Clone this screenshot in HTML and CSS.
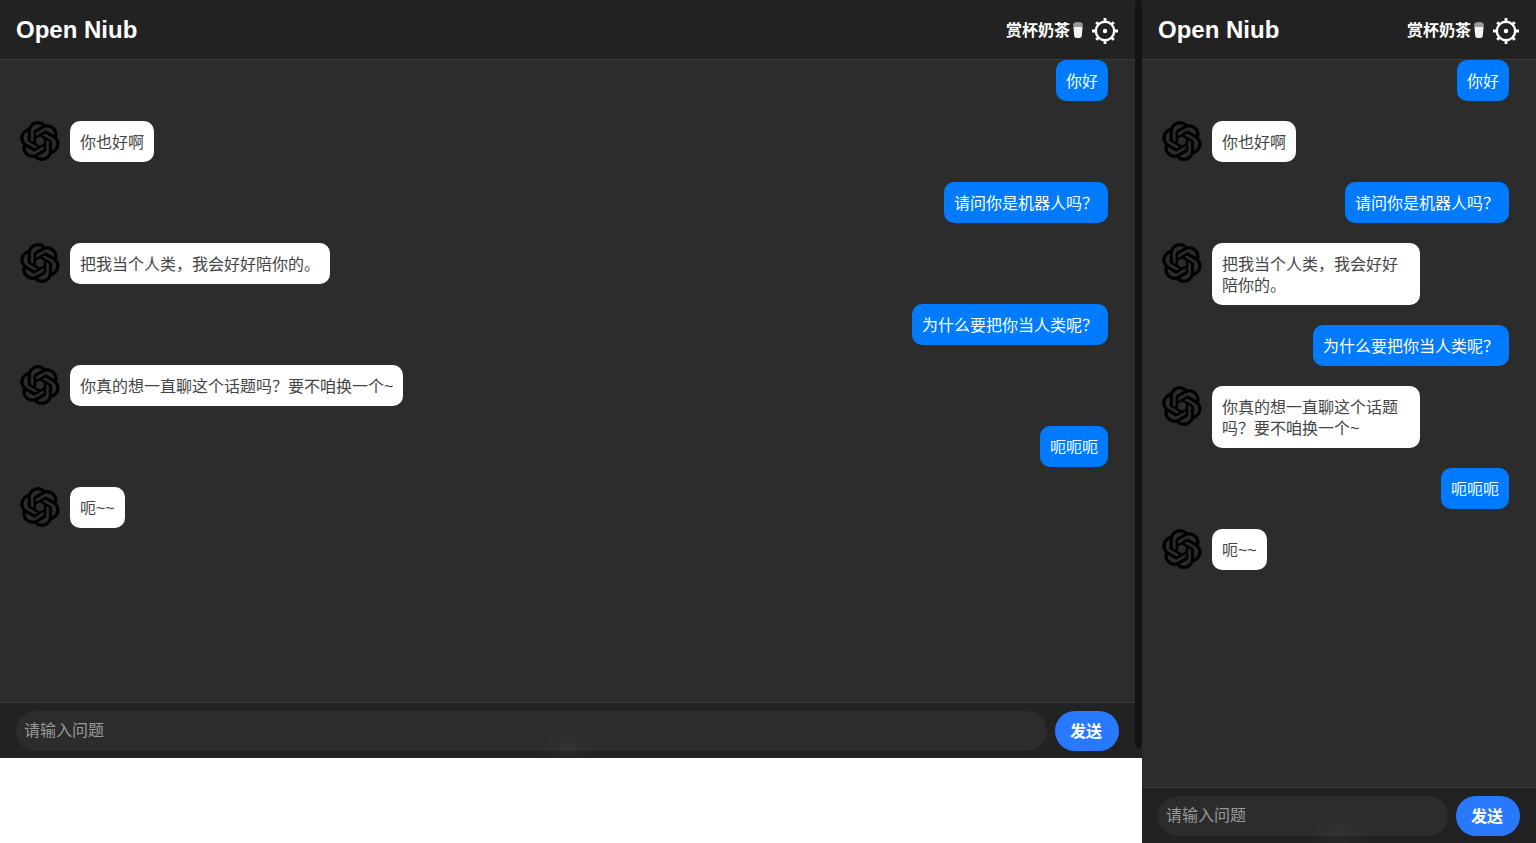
FILE: index.html
```html
<!DOCTYPE html>
<html lang="zh-CN">
<head>
  <meta charset="UTF-8">
  <meta name="viewport" content="width=device-width, initial-scale=1.0">
  <title>Open Niub</title>
  <link rel="stylesheet" href="styles.css">
</head>
<body>
  <svg class="icon-defs" width="0" height="0">
    <defs>
      <symbol id="logo" viewBox="0 0 41 41">
        <path fill="currentColor" stroke="currentColor" stroke-width="0.7" d="M37.5324 16.8707C37.9808 15.5241 38.1363 14.0974 37.9886 12.6859C37.8409 11.2744 37.3934 9.91076 36.676 8.68622C35.6126 6.83404 33.9882 5.3676 32.0373 4.4985C30.0864 3.62941 27.9098 3.40259 25.8215 3.85078C24.8796 2.7893 23.7219 1.94125 22.4257 1.36341C21.1295 0.785575 19.7249 0.491269 18.3058 0.500197C16.1708 0.495044 14.0893 1.16803 12.3614 2.42214C10.6335 3.67624 9.34853 5.44666 8.6917 7.47815C7.30085 7.76286 5.98686 8.3414 4.8377 9.17505C3.68854 10.0087 2.73073 11.0782 2.02839 12.312C0.956464 14.1591 0.498905 16.2988 0.721698 18.4228C0.944492 20.5467 1.83612 22.5449 3.268 24.1293C2.81966 25.4759 2.66413 26.9026 2.81182 28.3141C2.95951 29.7256 3.40701 31.0892 4.12437 32.3138C5.18791 34.1659 6.8123 35.6322 8.76321 36.5013C10.7141 37.3704 12.8907 37.5973 14.9789 37.1492C15.9208 38.2107 17.0786 39.0587 18.3747 39.6366C19.6709 40.2144 21.0755 40.5087 22.4946 40.4998C24.6307 40.5054 26.7133 39.8321 28.4418 38.5772C30.1704 37.3223 31.4556 35.5506 32.1119 33.5179C33.5027 33.2332 34.8167 32.6547 35.9659 31.821C37.115 30.9874 38.0728 29.9178 38.7752 28.684C39.8458 26.8371 40.3023 24.6979 40.0789 22.5748C39.8556 20.4517 38.9639 18.4544 37.5324 16.8707ZM22.4978 37.8849C20.7443 37.8874 19.0459 37.2733 17.6994 36.1501C17.7601 36.117 17.8666 36.0586 17.936 36.0161L25.9004 31.4156C26.1003 31.3019 26.2663 31.137 26.3813 30.9378C26.4964 30.7386 26.5563 30.5124 26.5549 30.2825V19.0542L29.9213 20.998C29.9389 21.0068 29.9541 21.0198 29.9656 21.0359C29.977 21.052 29.9842 21.0707 29.9867 21.0902V30.3889C29.9842 32.375 29.1946 34.2791 27.7909 35.6841C26.3872 37.0892 24.4838 37.8806 22.4978 37.8849ZM6.39227 31.0064C5.51397 29.4888 5.19742 27.7107 5.49804 25.9832C5.55718 26.0187 5.66048 26.0818 5.73461 26.1244L13.699 30.7248C13.8975 30.8408 14.1233 30.902 14.3532 30.902C14.583 30.902 14.8088 30.8408 15.0073 30.7248L24.731 25.1103V28.9979C24.7321 29.0177 24.7283 29.0376 24.7199 29.0556C24.7115 29.0736 24.6988 29.0893 24.6829 29.1012L16.6317 33.7497C14.9096 34.7416 12.8643 35.0097 10.9447 34.4954C9.02506 33.9811 7.38785 32.7263 6.39227 31.0064ZM4.29707 13.6194C5.17156 12.0998 6.55279 10.9364 8.19885 10.3327C8.19885 10.4013 8.19491 10.5228 8.19491 10.6071V19.808C8.19351 20.0378 8.25334 20.2638 8.36823 20.4629C8.48312 20.6619 8.64893 20.8267 8.84863 20.9404L18.5723 26.5542L15.206 28.4979C15.1894 28.5089 15.1703 28.5155 15.1505 28.5173C15.1307 28.5191 15.1107 28.516 15.0924 28.5082L7.04046 23.8557C5.32135 22.8601 4.06716 21.2235 3.55289 19.3046C3.03862 17.3858 3.30624 15.3413 4.29707 13.6194ZM31.955 20.0556L22.2312 14.4411L25.5976 12.4981C25.6142 12.4872 25.6333 12.4805 25.6531 12.4787C25.6729 12.4769 25.6928 12.4801 25.7111 12.4879L33.7631 17.1364C34.9967 17.849 36.0017 18.8982 36.6606 20.1613C37.3194 21.4244 37.6047 22.849 37.4832 24.2684C37.3617 25.6878 36.8382 27.0432 35.9743 28.1759C35.1103 29.3086 33.9415 30.1717 32.6047 30.6641C32.6047 30.5947 32.6047 30.4733 32.6047 30.3889V21.188C32.6066 20.9586 32.5474 20.7328 32.4332 20.5338C32.319 20.3348 32.154 20.1698 31.955 20.0556ZM35.3055 15.0128C35.2464 14.9765 35.1431 14.9142 35.069 14.8717L27.1045 10.2712C26.906 10.1554 26.6803 10.0943 26.4504 10.0943C26.2206 10.0943 25.9948 10.1554 25.7963 10.2712L16.0726 15.8858V11.9982C16.0715 11.9783 16.0753 11.9585 16.0837 11.9405C16.0921 11.9225 16.1048 11.9068 16.1207 11.8949L24.1719 7.25025C25.4053 6.53903 26.8158 6.19376 28.2383 6.25482C29.6608 6.31589 31.0364 6.78077 32.2044 7.59508C33.3723 8.40939 34.2842 9.53945 34.8334 10.8531C35.3826 12.1667 35.5464 13.6095 35.3055 15.0128ZM14.2424 21.9419L10.8752 19.9981C10.8576 19.9893 10.8423 19.9763 10.8309 19.9602C10.8195 19.9441 10.8122 19.9254 10.8098 19.9058V10.6071C10.8107 9.18295 11.2173 7.78848 11.9819 6.58696C12.7466 5.38544 13.8377 4.42659 15.1275 3.82264C16.4173 3.21869 17.8524 2.99464 19.2649 3.1767C20.6775 3.35876 22.0089 3.93941 23.1034 4.85067C23.0427 4.88379 22.937 4.94215 22.8668 4.98473L14.9024 9.58517C14.7025 9.69878 14.5366 9.86356 14.4215 10.0626C14.3065 10.2616 14.2466 10.4877 14.2479 10.7175L14.2424 21.9419ZM16.071 17.9991L20.4018 15.4978L24.7325 17.9975V22.9985L20.4018 25.4983L16.071 22.9985V17.9991Z"/>
      </symbol>
      <symbol id="cup" viewBox="0 0 12 16">
        <path fill="#9a9a9a" d="M1.2 2.4C1.2 1 2.6 0 6 0s4.8 1 4.8 2.4L10.6 5H1.4z"/>
        <path fill="#f2f2f2" d="M1.4 5h9.2l-.8 8.8c-.1 1.3-1 2.2-2.2 2.2H4.4c-1.2 0-2.1-.9-2.2-2.2z"/>
      </symbol>
      <symbol id="gear" viewBox="0 0 26 26">
        <circle cx="13" cy="13" r="9.2" fill="none" stroke="#fff" stroke-width="2.4"/>
        <circle cx="13" cy="13" r="2.2" fill="#fff"/>
        <path fill="#fff" d="M11.6 0h2.8v3.5h-2.8zM11.6 22.5h2.8V26h-2.8zM0 11.6h3.5v2.8H0zM22.5 11.6H26v2.8h-3.5zM3.2 5.2l2-2 2.4 2.4-2 2zM18.4 20.4l2-2 2.4 2.4-2 2zM3.2 20.8l2.4-2.4 2 2-2.4 2.4zM18.4 5.6l2.4-2.4 2 2-2.4 2.4z"/>
      </symbol>
    </defs>
  </svg>

  <div class="app app-wide">
    <header class="topbar">
      <div class="brand">Open Niub</div>
      <div class="tools">
        <span class="tip">赏杯奶茶</span>
        <svg class="cup"><use href="#cup"/></svg>
        <svg class="gear"><use href="#gear"/></svg>
      </div>
    </header>
    <main class="chat">
      <div class="msg msg-user"><div class="bubble">你好</div></div>
      <div class="msg msg-bot"><svg class="avatar"><use href="#logo"/></svg><div class="bubble">你也好啊</div></div>
      <div class="msg msg-user"><div class="bubble">请问你是机器人吗？</div></div>
      <div class="msg msg-bot"><svg class="avatar"><use href="#logo"/></svg><div class="bubble">把我当个人类，我会好好陪你的。</div></div>
      <div class="msg msg-user"><div class="bubble">为什么要把你当人类呢？</div></div>
      <div class="msg msg-bot"><svg class="avatar"><use href="#logo"/></svg><div class="bubble">你真的想一直聊这个话题吗？要不咱换一个~</div></div>
      <div class="msg msg-user"><div class="bubble">呃呃呃</div></div>
      <div class="msg msg-bot"><svg class="avatar"><use href="#logo"/></svg><div class="bubble">呃~~</div></div>
    </main>
    <footer class="composer">
      <div class="ask">请输入问题</div>
      <button class="send">发送</button>
    </footer>
  </div>
  <div class="scroll-track"><div class="scroll-thumb"></div></div>

  <div class="app app-narrow">
    <header class="topbar">
      <div class="brand">Open Niub</div>
      <div class="tools">
        <span class="tip">赏杯奶茶</span>
        <svg class="cup"><use href="#cup"/></svg>
        <svg class="gear"><use href="#gear"/></svg>
      </div>
    </header>
    <main class="chat">
      <div class="msg msg-user"><div class="bubble">你好</div></div>
      <div class="msg msg-bot"><svg class="avatar"><use href="#logo"/></svg><div class="bubble">你也好啊</div></div>
      <div class="msg msg-user"><div class="bubble">请问你是机器人吗？</div></div>
      <div class="msg msg-bot"><svg class="avatar"><use href="#logo"/></svg><div class="bubble bubble-wrap">把我当个人类，我会好好陪你的。</div></div>
      <div class="msg msg-user"><div class="bubble">为什么要把你当人类呢？</div></div>
      <div class="msg msg-bot"><svg class="avatar"><use href="#logo"/></svg><div class="bubble bubble-wrap">你真的想一直聊这个话题吗？要不咱换一个~</div></div>
      <div class="msg msg-user"><div class="bubble">呃呃呃</div></div>
      <div class="msg msg-bot"><svg class="avatar"><use href="#logo"/></svg><div class="bubble">呃~~</div></div>
    </main>
    <footer class="composer">
      <div class="ask">请输入问题</div>
      <button class="send">发送</button>
    </footer>
  </div>
</body>
</html>
```

FILE: styles.css
```css
/* Reset */
html, body {
  margin: 0;
  padding: 0;
  background: #fff;
}

body {
  display: flex;
  align-items: flex-start;
  height: 843px;
  overflow: hidden;
  font-family: "Liberation Sans", "Noto Sans CJK SC", sans-serif;
  font-size: 16px;
}

.icon-defs {
  position: absolute;
}

.app {
  display: flex;
  flex-direction: column;
  position: relative;
  flex: none;
  background: #2c2c2c;
}

.app-wide {
  width: 1135px;
  height: 758px;
}

.app-narrow {
  width: 394px;
  height: 843px;
}

/* faint glow from the middle of the bottom edge */
.app::after {
  content: "";
  position: absolute;
  left: 50%;
  bottom: 0;
  width: 60px;
  height: 30px;
  margin-left: -30px;
  background: radial-gradient(ellipse at 50% 80%, rgba(255, 255, 255, 0.03), rgba(255, 255, 255, 0) 70%);
  pointer-events: none;
}

.scroll-track {
  flex: none;
  width: 7px;
  height: 758px;
  background: #222;
}

.scroll-thumb {
  height: 748px;
  background: #141414;
  border-radius: 4px;
}

.topbar {
  display: flex;
  align-items: center;
  justify-content: space-between;
  flex: none;
  box-sizing: border-box;
  height: 60px;
  padding: 0 17px 0 16px;
  background: #222;
  border-bottom: 1px solid #3a3a3a;
  color: #fff;
}

.brand {
  font-size: 24px;
  font-weight: bold;
}

.tools {
  display: flex;
  align-items: center;
}

.tip {
  margin-bottom: 2px;
  font-weight: bold;
}

.cup {
  width: 12px;
  height: 16px;
  margin-left: 2px;
}

.gear {
  width: 26px;
  height: 26px;
  margin-left: 8px;
  margin-top: 2px;
}

.chat {
  display: flex;
  flex-direction: column;
  flex: 1;
  gap: 20px;
  padding: 0 27px 0 20px;
  min-height: 0;
}

.msg {
  display: flex;
  align-items: flex-start;
  gap: 10px;
}

.msg-user {
  justify-content: flex-end;
}

.avatar {
  flex: none;
  width: 40px;
  height: 40px;
  color: #000;
}

.bubble {
  box-sizing: border-box;
  padding: 11px 10px 9px;
  border-radius: 10px;
  line-height: 21px;
}

.msg-user .bubble {
  background: #007bff;
  color: #fff;
}

.msg-bot .bubble {
  background: #fff;
  color: #444;
}

.bubble-wrap {
  width: 208px;
}

.composer {
  display: flex;
  gap: 8px;
  flex: none;
  box-sizing: border-box;
  height: 56px;
  padding: 8px 16px 7px;
  background: #222;
  border-top: 1px solid #3a3a3a;
}

.ask {
  flex: 1;
  box-sizing: border-box;
  height: 40px;
  padding: 0 8px;
  border-radius: 20px;
  background: #2c2c2c;
  color: #999;
  line-height: 40px;
}

.send {
  flex: none;
  width: 64px;
  height: 40px;
  padding: 0 2px 2px 0;
  border: 0;
  border-radius: 20px;
  background: #2979ff;
  color: #fff;
  font-family: inherit;
  font-size: 16px;
  font-weight: bold;
}
```
